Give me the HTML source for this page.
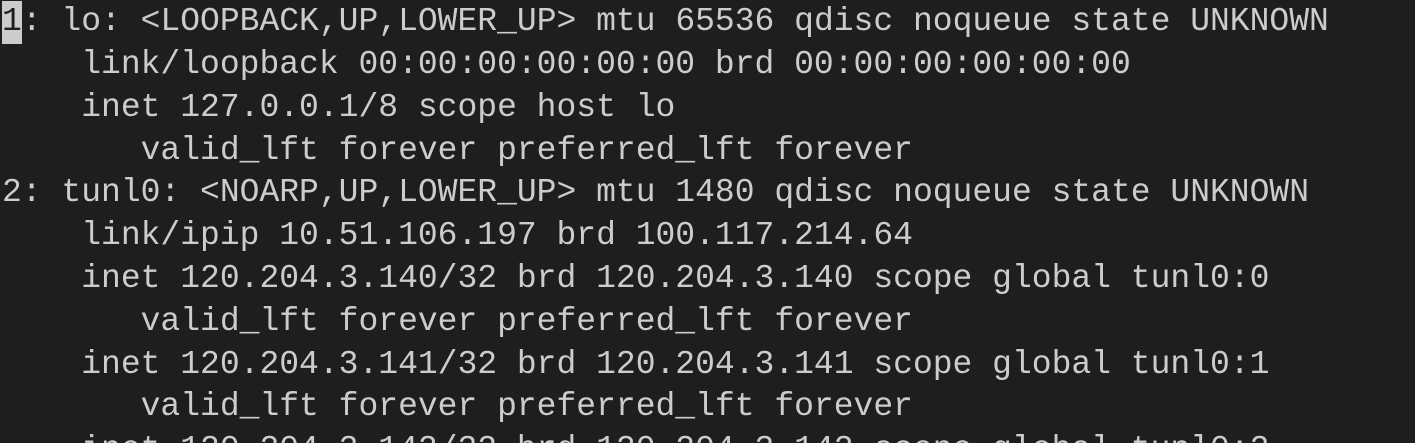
<!DOCTYPE html>
<html><head><style>
html,body{margin:0;padding:0;background:#1e1e1e;width:1415px;height:443px;overflow:hidden}
pre{margin:0;padding:1px 0 0 2px;font-family:"Liberation Mono",monospace;font-size:33px;line-height:42.8px;color:#cccccc;white-space:pre}
.c{background:#cccccc;color:#1e1e1e;display:inline-block;height:43px;vertical-align:top}
</style></head><body><pre><span class="c">1</span>: lo: &lt;LOOPBACK,UP,LOWER_UP&gt; mtu 65536 qdisc noqueue state UNKNOWN
    link/loopback 00:00:00:00:00:00 brd 00:00:00:00:00:00
    inet 127.0.0.1/8 scope host lo
       valid_lft forever preferred_lft forever
2: tunl0: &lt;NOARP,UP,LOWER_UP&gt; mtu 1480 qdisc noqueue state UNKNOWN
    link/ipip 10.51.106.197 brd 100.117.214.64
    inet 120.204.3.140/32 brd 120.204.3.140 scope global tunl0:0
       valid_lft forever preferred_lft forever
    inet 120.204.3.141/32 brd 120.204.3.141 scope global tunl0:1
       valid_lft forever preferred_lft forever
    inet 120.204.3.142/32 brd 120.204.3.142 scope global tunl0:2</pre></body></html>
